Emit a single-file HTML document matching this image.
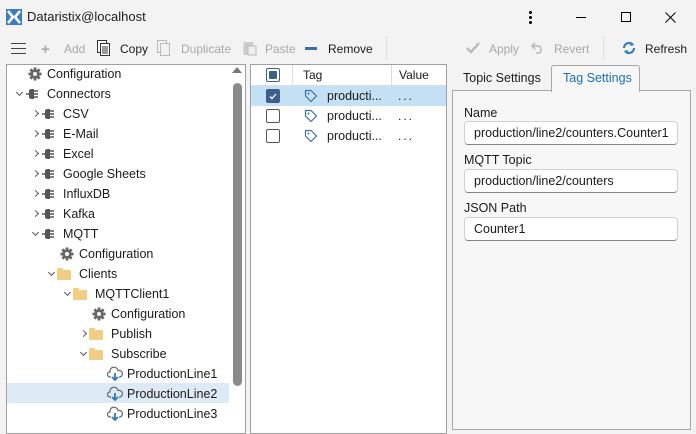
<!DOCTYPE html>
<html><head><meta charset="utf-8"><style>
*{box-sizing:border-box;margin:0;padding:0}
body{width:696px;height:426px;overflow:hidden;background:#f3f3f3;font-family:"Liberation Sans",sans-serif;font-size:12px;color:#1b1b1b;position:relative}
.a{position:absolute;white-space:nowrap}
.dis{color:#a8a8a8}
.tree{position:absolute;left:6px;top:64px;width:240px;height:370px;background:#fff;border:1px solid #a0a0a0}
.row{position:absolute;height:20px;line-height:20px}
.chev{position:absolute;width:5px;height:5px;border-right:1.2px solid #555;border-bottom:1.2px solid #555}
.cr{transform:rotate(-45deg)}
.cd{transform:rotate(45deg)}
.folder{position:absolute;width:14px;height:10px;background:#f2cd84;border-radius:1px}
.folder:before{content:"";position:absolute;left:0;top:-2px;width:6px;height:3px;background:#f2cd84;border-radius:1px 1px 0 0}
.inp{position:absolute;left:464px;width:214px;height:24px;background:#fff;border:1px solid #d0d0d0;border-bottom:1px solid #868686;border-radius:4px;padding-left:9px;line-height:22px;font-size:12.5px}
.cb{position:absolute;left:266px;width:14px;height:14px;border:1px solid #555;border-radius:2px;background:#fff}
</style></head><body>
<svg class="a" style="left:6px;top:9px" width="16" height="16" viewBox="0 0 16 16"><rect width="16" height="16" fill="#3c7cc4"/><path d="M2 2L7 8L2 14M14 2L9 8L14 14" stroke="#fff" stroke-width="2.6" fill="none"/></svg>
<div class="a" style="left:27px;top:9px;font-size:13px">Dataristix@localhost</div>
<div class="a" style="left:529px;top:11px;width:3px;height:3px;background:#000;border-radius:2px;box-shadow:0 5px 0 #000,0 10px 0 #000"></div>
<div class="a" style="left:576px;top:17px;width:10px;height:1px;background:#000"></div>
<div class="a" style="left:621px;top:12px;width:10px;height:10px;border:1px solid #000"></div>
<svg class="a" style="left:665px;top:12px" width="11" height="11"><path d="M0.5 0.5L10.5 10.5M10.5 0.5L0.5 10.5" stroke="#000" stroke-width="1"/></svg>
<div class="a" style="left:11px;top:43px;width:15px;height:1px;background:#444;box-shadow:0 5px 0 #444,0 10px 0 #444"></div>
<div class="a dis" style="left:41px;top:41px;font-size:15px;font-weight:bold">+</div>
<div class="a dis" style="left:64px;top:42px">Add</div>
<svg class="a" style="left:97px;top:40px" width="14" height="16"><rect x="0.5" y="0.5" width="9" height="12" fill="#fff" stroke="#333"/><rect x="3.5" y="3.5" width="9" height="12" fill="#fff" stroke="#333"/><path d="M5 7h6M5 9h6M5 11h6M5 13h6" stroke="#333"/></svg>
<div class="a" style="left:120px;top:42px">Copy</div>
<svg class="a" style="left:157px;top:40px" width="14" height="16"><rect x="0.5" y="0.5" width="9" height="12" fill="none" stroke="#bbb"/><rect x="3.5" y="3.5" width="9" height="12" fill="#f3f3f3" stroke="#bbb"/></svg>
<div class="a dis" style="left:181px;top:42px">Duplicate</div>
<svg class="a" style="left:243px;top:40px" width="14" height="16"><rect x="0.5" y="2" width="10" height="13" fill="#ccc"/><rect x="5" y="6" width="8" height="9" fill="#eee" stroke="#bbb"/></svg>
<div class="a dis" style="left:265px;top:42px">Paste</div>
<div class="a" style="left:305px;top:47px;width:12px;height:3px;background:#3a6ea5"></div>
<div class="a" style="left:328px;top:42px">Remove</div>
<div class="a" style="left:386px;top:36px;width:1px;height:24px;background:#ddd"></div>
<svg class="a" style="left:466px;top:42px" width="14" height="12"><path d="M1 6L5 10L13 1" stroke="#bbb" stroke-width="2.4" fill="none"/></svg>
<div class="a dis" style="left:489px;top:42px">Apply</div>
<svg class="a" style="left:531px;top:41px" width="13" height="13"><path d="M4 2L1 5L4 8M1 5H8A4 4 0 0 1 8 12H5" stroke="#bbb" stroke-width="1.6" fill="none"/></svg>
<div class="a dis" style="left:554px;top:42px">Revert</div>
<div class="a" style="left:603px;top:36px;width:1px;height:24px;background:#ddd"></div>
<svg class="a" style="left:622px;top:41px" width="14" height="14" viewBox="0 0 14 14"><path d="M2 7A5 5 0 0 1 11 4M12 7A5 5 0 0 1 3 10" stroke="#3a7cc0" stroke-width="2.2" fill="none"/><path d="M9 1L12 4L8 5Z M5 13L2 10L6 9Z" fill="#3a7cc0"/></svg>
<div class="a" style="left:645px;top:42px">Refresh</div>
<div class="tree">
<div class="a" style="left:225px;top:2px;width:0;height:0;border-left:5px solid transparent;border-right:5px solid transparent;border-bottom:6px solid #777"></div>
<div class="a" style="left:226px;top:18px;width:9px;height:303px;background:#8a8a8a;border-radius:5px"></div>
<div class="a" style="left:0;top:318px;width:222px;height:20px;background:#dde9f5"></div>
</div>
<div id="tr"></div>
<div class="a" style="left:250px;top:64px;width:197px;height:370px;background:#fff;border:1px solid #a0a0a0"></div>
<div class="a" style="left:251px;top:85px;width:195px;height:1px;background:#ddd"></div>
<div class="a" style="left:292px;top:65px;width:1px;height:20px;background:#ddd"></div>
<div class="a" style="left:391px;top:65px;width:1px;height:20px;background:#ddd"></div>
<div class="cb" style="top:68px;border-color:#3c5f8c"><div style="margin:2px;width:8px;height:8px;background:#3c5f8c;border-radius:1px"></div></div>
<div class="a" style="left:303px;top:68px">Tag</div>
<div class="a" style="left:399px;top:68px">Value</div>
<div class="a" style="left:251px;top:86px;width:195px;height:20px;background:#c4e0f4"></div>
<div class="cb" style="top:89px;background:#3c5f8c;border-color:#3c5f8c"><svg width="12" height="12" style="position:absolute;left:0;top:0"><path d="M3 6.5L5 8.5L9 4" stroke="#fff" stroke-width="1.3" fill="none"/></svg></div>
<div class="cb" style="top:109px"></div>
<div class="cb" style="top:129px"></div>
<div id="tags"></div>
<div class="a" style="left:452px;top:90px;width:239px;height:340px;background:#f7f7f7;border:1px solid #a8a8a8"></div>
<div class="a" style="left:463px;top:71px;font-size:12.5px">Topic Settings</div>
<div class="a" style="left:551px;top:65px;width:89px;height:27px;background:#f7f7f7;border:1px solid #a8a8a8;border-bottom:none;border-radius:3px 3px 0 0"></div>
<div class="a" style="left:563px;top:71px;font-size:12.5px;color:#1a6fb5">Tag Settings</div>
<div class="a" style="left:464px;top:106px;font-size:12.5px">Name</div>
<div class="inp" style="top:121px">production/line2/counters.Counter1</div>
<div class="a" style="left:464px;top:153px;font-size:12.5px">MQTT Topic</div>
<div class="inp" style="top:169px">production/line2/counters</div>
<div class="a" style="left:464px;top:201px;font-size:12.5px">JSON Path</div>
<div class="inp" style="top:217px">Counter1</div>
<script>
var T=[["g",35,null,"Configuration"],["p",31,20,"Connectors","d"],["p",47,36,"CSV"],["p",47,36,"E-Mail"],["p",47,36,"Excel"],["p",47,36,"Google Sheets"],["p",47,36,"InfluxDB"],["p",47,36,"Kafka"],["p",47,36,"MQTT","d"],["g",67,null,"Configuration"],["f",63,52,"Clients","d"],["f",79,68,"MQTTClient1","d"],["g",99,null,"Configuration"],["f",95,84,"Publish"],["f",95,84,"Subscribe","d"],["c",115,null,"ProductionLine1"],["c",115,null,"ProductionLine2"],["c",115,null,"ProductionLine3"]];
var h="";T.forEach(function(t,i){var y=64+i*20;var tx=t[0]=="g"||t[0]=="c"?t[1]+12:t[1]+16;
if(t[2]!=null)h+='<div class="chev '+(t[4]?"cd":"cr")+'" style="left:'+(t[2]-3)+'px;top:'+(y+(t[4]?6:7))+'px"></div>';
if(t[0]=="g")h+='<svg class="a" style="left:'+(t[1]-7)+'px;top:'+(y+3)+'px" width="14" height="14" viewBox="0 0 14 14"><g fill="#666"><circle cx="7" cy="7" r="4.6"/><rect x="5.6" y="0.5" width="2.8" height="13"/><rect x="0.5" y="5.6" width="13" height="2.8"/><rect x="5.6" y="0.5" width="2.8" height="13" transform="rotate(45 7 7)"/><rect x="5.6" y="0.5" width="2.8" height="13" transform="rotate(-45 7 7)"/></g><circle cx="7" cy="7" r="2" fill="#fff"/></svg>';
if(t[0]=="p")h+='<svg class="a" style="left:'+(t[1]-5)+'px;top:'+(y+5)+'px" width="13" height="10"><path d="M0 5H4" stroke="#555" stroke-width="1.5"/><path d="M3 2Q3 0 6 0H8V10H6Q3 10 3 8Z" fill="#555"/><path d="M8 2H12M8 5H12M8 8H12" stroke="#555" stroke-width="1.4"/></svg>';
if(t[0]=="f")h+='<div class="folder" style="left:'+(t[1]-6)+'px;top:'+(y+6)+'px"></div>';
if(t[0]=="c")h+='<svg class="a" style="left:'+(t[1]-8)+'px;top:'+(y+2)+'px" width="16" height="16" viewBox="0 0 16 16"><path d="M4 11H3A2.5 2.5 0 0 1 3 6A4 4 0 0 1 11 4.5A3 3 0 0 1 13 11H12" stroke="#666" stroke-width="1.2" fill="none"/><path d="M8 7V14M5 11L8 14L11 11" stroke="#2f7ac4" stroke-width="1.8" fill="none"/></svg>';
h+='<div class="row a" style="left:'+tx+'px;top:'+y+'px;font-size:12.5px">'+t[3]+'</div>';});
document.getElementById("tr").innerHTML=h;
var g="";for(var i=0;i<3;i++){var y=86+i*20;g+='<svg class="a" style="left:304px;top:'+(y+3)+'px" width="14" height="14"><path d="M1.5 1.5H7L12.5 7L7 12.5L1.5 7Z" stroke="#3a70aa" stroke-width="1.2" fill="none" stroke-linejoin="round"/><circle cx="4.5" cy="4.5" r="1" fill="#3a70aa"/></svg><div class="row a" style="left:327px;top:'+y+'px;font-size:12.5px">producti...</div><div class="row a" style="left:398px;top:'+y+'px;letter-spacing:2px">...</div>';}
document.getElementById("tags").innerHTML=g;
</script>
</body></html>
